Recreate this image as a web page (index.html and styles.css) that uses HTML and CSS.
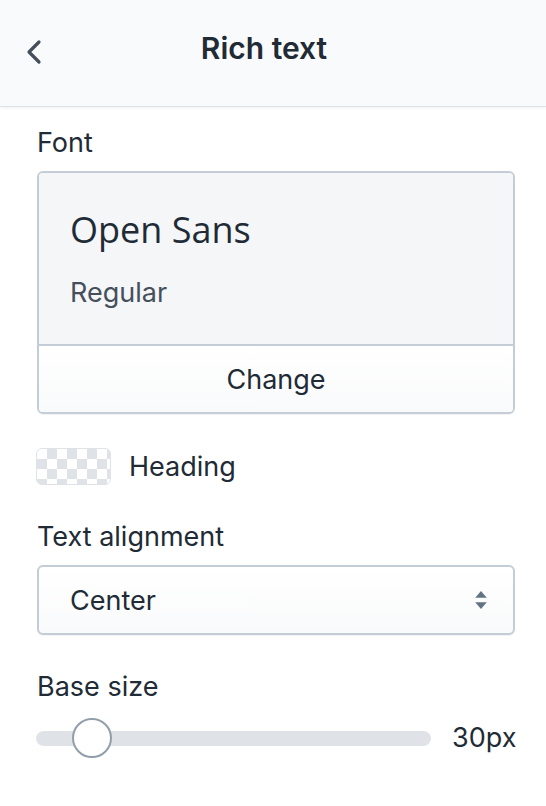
FILE: index.html
```html
<!DOCTYPE html>
<html>
<head>
<meta charset="utf-8">
<link rel="stylesheet" href="styles.css">
</head>
<body>
<header class="topbar">
  <button class="back" aria-label="Back">
    <svg width="16" height="26" viewBox="0 0 16 26"><path d="M13 3 L3 13 L13 23" fill="none" stroke="#454f5b" stroke-width="3.2" stroke-linecap="round" stroke-linejoin="round"/></svg>
  </button>
  <h1 class="title">Rich text</h1>
</header>
<main class="panel">
  <section class="field first">
    <div class="label">Font</div>
    <div class="font-card">
      <div class="font-preview">
        <div class="font-name">Open Sans</div>
        <div class="font-style">Regular</div>
      </div>
      <div class="font-change">Change</div>
    </div>
  </section>
  <section class="color-row">
    <span class="swatch"></span>
    <span class="color-label">Heading</span>
  </section>
  <section class="field">
    <div class="label">Text alignment</div>
    <div class="select">
      <span>Center</span>
      <svg width="12" height="20" viewBox="0 0 12 20"><path d="M6 1 L11.8 7.8 H0.2 Z" fill="#637381"/><path d="M6 19 L11.8 12.2 H0.2 Z" fill="#637381"/></svg>
    </div>
  </section>
  <section class="field">
    <div class="label">Base size</div>
    <div class="range-row">
      <div class="track"><span class="thumb"></span></div>
      <span class="range-value">30px</span>
    </div>
  </section>
</main>
</body>
</html>
```
FILE: styles.css
```css
* { box-sizing: border-box; }
html, body { margin: 0; padding: 0; background: #fff; }
body {
  font-family: "Inter", "Roboto", "Liberation Sans", sans-serif;
  color: #212b36;
  width: 546px;
}
.topbar {
  height: 107px;
  background: #f9fafb;
  border-bottom: 1px solid #dfe3e8;
  box-shadow: 0 1px 3px rgba(0,0,0,0.06);
  display: flex;
  align-items: center;
  justify-content: center;
  position: relative;
  padding: 0 18px 10px 0;
}
.back {
  position: absolute;
  left: 26px;
  top: 38px;
  border: 0;
  background: none;
  padding: 0;
  width: 20px;
  height: 28px;
  display: flex;
  align-items: center;
}
.title {
  margin: 0;
  font-size: 30px;
  font-weight: 600;
  color: #212b36;
}
.panel {
  padding: 0 31px 0 37px;
  display: flex;
  flex-direction: column;
}
.field { display: flex; flex-direction: column; }
.label {
  font-size: 27px;
  line-height: 30px;
  margin-top: 37px;
  margin-bottom: 13px;
  color: #212b36;
}
.field.first .label { margin-top: 21px; }
.font-card {
  border: 2px solid #c4cdd5;
  border-radius: 6px;
  overflow: hidden;
  box-shadow: 0 1px 1px rgba(0,0,0,0.05);
}
.font-preview {
  background: #f4f6f8;
  padding: 35px 31px 0;
  height: 173px;
  border-bottom: 2px solid #c4cdd5;
}
.font-name {
  font-family: "Open Sans", sans-serif;
  font-size: 36px;
  line-height: 44px;
  color: #212b36;
}
.font-style {
  font-size: 27px;
  line-height: 34px;
  margin-top: 24px;
  color: #454f5b;
}
.font-change {
  height: 66px;
  display: flex;
  align-items: center;
  justify-content: center;
  font-size: 27px;
  background: linear-gradient(#fff, #f9fafb);
}
.color-row {
  display: flex;
  align-items: center;
  margin-top: 34px;
  gap: 18px;
  margin-left: -1px;
}
.swatch {
  width: 75px;
  height: 37px;
  border-radius: 6px;
  border: 1px solid #dfe3e8;
  background-color: #fff;
  background-image:
    linear-gradient(45deg, #dfe3e8 25%, transparent 25%, transparent 75%, #dfe3e8 75%),
    linear-gradient(45deg, #dfe3e8 25%, transparent 25%, transparent 75%, #dfe3e8 75%);
  background-size: 20px 20px;
  background-position: 0 0, 10px 10px;
}
.color-label { font-size: 27px; line-height: 30px; }
.select {
  height: 70px;
  border: 2px solid #c4cdd5;
  border-radius: 6px;
  background: linear-gradient(#fff, #f9fafb);
  box-shadow: 0 1px 1px rgba(0,0,0,0.05);
  display: flex;
  align-items: center;
  justify-content: space-between;
  padding: 0 26px 0 31px;
  font-size: 27px;
}
.range-row {
  display: flex;
  align-items: center;
  gap: 21px;
  margin-top: 3px;
  margin-left: -1px;
}
.track {
  flex: 0 0 395px;
  height: 15px;
  background: #dfe3e8;
  border-radius: 8px;
  position: relative;
}
.thumb {
  position: absolute;
  left: 36px;
  top: 50%;
  width: 40px;
  height: 40px;
  margin-top: -20px;
  border-radius: 50%;
  background: #fff;
  border: 2px solid #919eab;
}
.range-value { font-size: 27px; line-height: 40px; }
```
